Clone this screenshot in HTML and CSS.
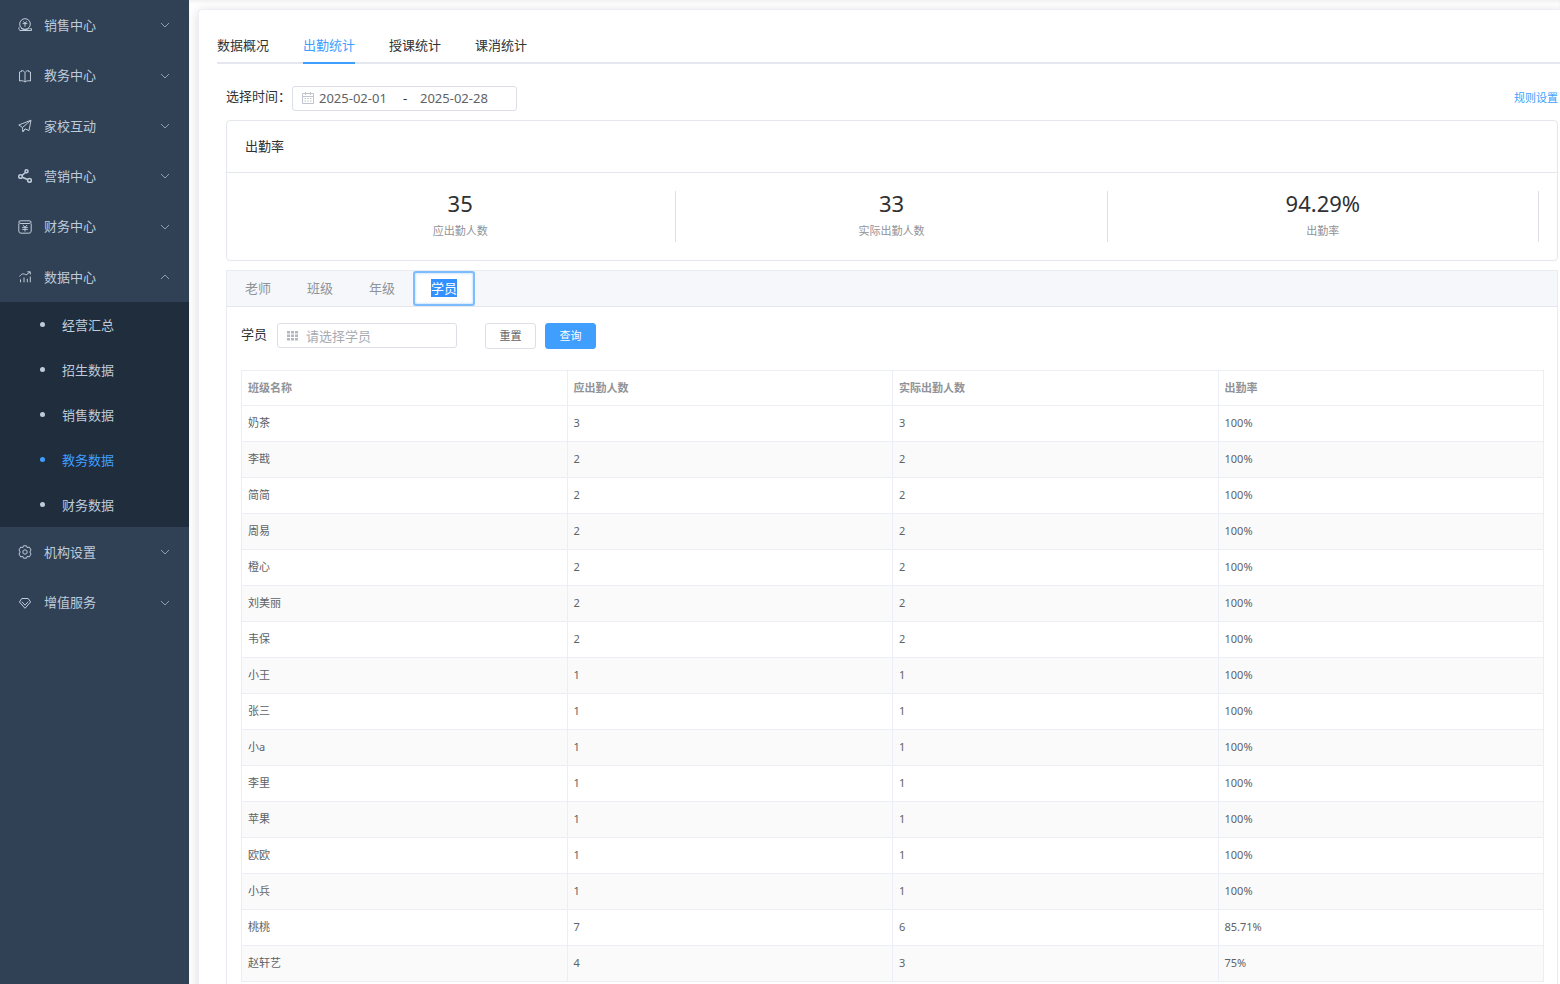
FILE: index.html
```html
<!DOCTYPE html>
<html lang="zh-CN">
<head>
<meta charset="utf-8">
<title>出勤统计</title>
<link rel="stylesheet" href="styles.css">
</head>
<body>
<div class="app">
  <nav class="sidebar" aria-label="主菜单">
    <ul class="menu">
      <li class="menu-group"><button class="menu-item" type="button">
        <svg class="icon" viewBox="0 0 14 14"><circle cx="7" cy="6" r="5.300"/><path d="M5.200 3.300L7 5.200l1.800-1.900M4.600 5.600h4.800M7 5.300v3.400M2 8.500C.6 9.500.2 11.500 2 12.500h11.500v-1.800h-2M3 10.300c2 1.600 6 1.700 8 .2"/></svg>
        <span class="menu-label">销售中心</span><svg class="chevron" viewBox="0 0 10 10"><path d="M1 3l4 4 4-4"/></svg></button></li>
      <li class="menu-group"><button class="menu-item" type="button">
        <svg class="icon" viewBox="0 0 14 14"><path d="M7 3.500v9.500M7 3.500C6 2 4.500 1.500 3.500 1.500v1L1.500 3v9c2-.5 4-.3 5.500 1 1.500-1.300 3.500-1.500 5.500-1V3l-2-.5v-1C9.500 1.500 8 2 7 3.500z"/></svg>
        <span class="menu-label">教务中心</span><svg class="chevron" viewBox="0 0 10 10"><path d="M1 3l4 4 4-4"/></svg></button></li>
      <li class="menu-group"><button class="menu-item" type="button">
        <svg class="icon" viewBox="0 0 14 14"><path d="M.8 6L13 1.200l-2 10.300-4-1.600-2.200 2.900-.3-4.300zM4.500 8.500L13 1.200M7 9.900l-2.200 2.900"/></svg>
        <span class="menu-label">家校互动</span><svg class="chevron" viewBox="0 0 10 10"><path d="M1 3l4 4 4-4"/></svg></button></li>
      <li class="menu-group"><button class="menu-item" type="button">
        <svg class="icon icon-bold" viewBox="0 0 14 14"><circle cx="8.500" cy="2.300" r="1.500"/><circle cx="2.500" cy="7.500" r="1.800"/><circle cx="11.500" cy="11.300" r="1.900"/><path d="M7.500 3.500L4 6.300M4.300 8.300l5.300 2.200"/></svg>
        <span class="menu-label">营销中心</span><svg class="chevron" viewBox="0 0 10 10"><path d="M1 3l4 4 4-4"/></svg></button></li>
      <li class="menu-group"><button class="menu-item" type="button">
        <svg class="icon" viewBox="0 0 14 14"><path d="M.8 3.500V11q0 2.200 2.200 2.200h8q2.200 0 2.200-2.200V3.500M3 .8h8q2.200 0 2.200 1.200T11 3.500H3Q.8 3.500.8 2T3 .8M4.800 5l2.200 2.200L9.200 5M4.200 7.400h5.600M4.200 9.400h5.600M7 7.200v4.300"/></svg>
        <span class="menu-label">财务中心</span><svg class="chevron" viewBox="0 0 10 10"><path d="M1 3l4 4 4-4"/></svg></button></li>
      <li class="menu-group"><button class="menu-item" type="button" aria-expanded="true">
        <svg class="icon" viewBox="0 0 14 14"><path d="M1.500 6.500C4 3 6 3.500 8 5l4-3M9.300 1.800h3v2.700M2.500 9.300v3M6 7.500v4.800M9.300 8.800v3.500M12.300 6.500v5.800"/></svg>
        <span class="menu-label">数据中心</span><svg class="chevron" viewBox="0 0 10 10"><path d="M1 7l4-4 4 4"/></svg></button>
        <ul class="submenu">
          <li><a class="submenu-item" href="#">经营汇总</a></li>
          <li><a class="submenu-item" href="#">招生数据</a></li>
          <li><a class="submenu-item" href="#">销售数据</a></li>
          <li><a class="submenu-item is-active" href="#" aria-current="page">教务数据</a></li>
          <li><a class="submenu-item" href="#">财务数据</a></li>
        </ul></li>
      <li class="menu-group"><button class="menu-item" type="button">
        <svg class="icon" viewBox="0 0 14 14"><path d="M5.500.8h3l.6 1.800 2.200-.5 1.700 2.800L11.900 7l1.100 2.100-1.700 2.800-2.200-.5-.6 1.800h-3l-.6-1.800-2.200.5L1 9.100 2.100 7 1 4.900l1.700-2.800 2.200.5z"/><circle cx="7" cy="7" r="2.200"/></svg>
        <span class="menu-label">机构设置</span><svg class="chevron" viewBox="0 0 10 10"><path d="M1 3l4 4 4-4"/></svg></button></li>
      <li class="menu-group"><button class="menu-item" type="button">
        <svg class="icon" viewBox="0 0 14 14"><path d="M3.800 2.500h6.400L12.600 6 7 12.300 1.400 6zM3.800 5.700L7 9.200l3.200-3.500"/></svg>
        <span class="menu-label">增值服务</span><svg class="chevron" viewBox="0 0 10 10"><path d="M1 3l4 4 4-4"/></svg></button></li>
    </ul>
  </nav>

  <main class="main">
    <div class="page-card">
      <nav class="page-tabs">
        <a class="page-tab" href="#">数据概况</a>
        <a class="page-tab is-active" href="#">出勤统计</a>
        <a class="page-tab" href="#">授课统计</a>
        <a class="page-tab" href="#">课消统计</a>
      </nav>

      <div class="content">
        <div class="filter-row">
          <label class="filter-label" for="date-start">选择时间：</label>
          <div class="date-range">
            <svg class="calendar" viewBox="0 0 12 12"><path d="M.5 1.500h11v10H.5zM.5 4.500h11M3.500 0v3M8.500 0v3M2.500 6.500h1.500M5.300 6.500h1.500M8 6.500h1.500M2.500 9h1.500M5.300 9h1.500M8 9h1.500"/></svg>
            <input class="date-input" id="date-start" value="2025-02-01">
            <span class="date-sep">-</span>
            <input class="date-input" aria-label="结束日期" value="2025-02-28">
          </div>
          <a class="rule-link" href="#">规则设置</a>
        </div>

        <section class="summary">
          <h2 class="summary-title">出勤率</h2>
          <div class="stats">
            <div class="stat"><div class="stat-value">35</div><div class="stat-label">应出勤人数</div></div>
            <div class="stat"><div class="stat-value">33</div><div class="stat-label">实际出勤人数</div></div>
            <div class="stat"><div class="stat-value">94.29%</div><div class="stat-label">出勤率</div></div>
          </div>
        </section>

        <section class="detail">
          <div class="detail-tabs" role="tablist">
            <button class="detail-tab" type="button" role="tab">老师</button>
            <button class="detail-tab" type="button" role="tab">班级</button>
            <button class="detail-tab" type="button" role="tab">年级</button>
            <button class="detail-tab is-active" type="button" role="tab" aria-selected="true"><span class="selected-text">学员</span></button>
          </div>
          <div class="detail-body">
            <form class="search">
              <label class="search-label" for="student">学员</label>
              <div class="search-box">
                <svg class="grid-icon" viewBox="0 0 11 10"><path d="M0 0h3v2.500H0zM4 0h3v2.500H4zM8 0h3v2.500H8zM0 3.500h3V6H0zM4 3.500h3V6H4zM8 3.500h3V6H8zM0 7h3v2.500H0zM4 7h3v2.500H4zM8 7h3v2.500H8z"/></svg>
                <input class="search-input" id="student" placeholder="请选择学员">
              </div>
              <button class="btn" type="reset">重置</button>
              <button class="btn btn-primary" type="button">查询</button>
            </form>
            <table class="table">
              <thead><tr><th>班级名称</th><th>应出勤人数</th><th>实际出勤人数</th><th>出勤率</th></tr></thead>
              <tbody>
                <tr><td>奶茶</td><td>3</td><td>3</td><td>100%</td></tr>
                <tr><td>李戡</td><td>2</td><td>2</td><td>100%</td></tr>
                <tr><td>简简</td><td>2</td><td>2</td><td>100%</td></tr>
                <tr><td>周易</td><td>2</td><td>2</td><td>100%</td></tr>
                <tr><td>橙心</td><td>2</td><td>2</td><td>100%</td></tr>
                <tr><td>刘美丽</td><td>2</td><td>2</td><td>100%</td></tr>
                <tr><td>韦保</td><td>2</td><td>2</td><td>100%</td></tr>
                <tr><td>小王</td><td>1</td><td>1</td><td>100%</td></tr>
                <tr><td>张三</td><td>1</td><td>1</td><td>100%</td></tr>
                <tr><td>小a</td><td>1</td><td>1</td><td>100%</td></tr>
                <tr><td>李里</td><td>1</td><td>1</td><td>100%</td></tr>
                <tr><td>苹果</td><td>1</td><td>1</td><td>100%</td></tr>
                <tr><td>欧欧</td><td>1</td><td>1</td><td>100%</td></tr>
                <tr><td>小兵</td><td>1</td><td>1</td><td>100%</td></tr>
                <tr><td>桃桃</td><td>7</td><td>6</td><td>85.71%</td></tr>
                <tr><td>赵轩艺</td><td>4</td><td>3</td><td>75%</td></tr>
              </tbody>
            </table>
          </div>
        </section>
      </div>
    </div>
  </main>
</div>
</body>
</html>
```
FILE: styles.css
```css
* { box-sizing: border-box; }
body {
  margin: 0;
  font: 13px/20px "Noto Sans", "Noto Sans CJK SC", sans-serif;
  color: #303133;
  background: #fff;
}
button, input { font: inherit; color: inherit; margin: 0; padding: 0; border: 0; background: none; }
button { cursor: pointer; }
input { min-width: 0; outline: 0; }
a { color: inherit; text-decoration: none; }
ul { margin: 0; padding: 0; list-style: none; }
svg { flex: none; fill: none; stroke: currentColor; }

.app { display: flex; height: 100vh; overflow: hidden; }

/* Sidebar */
.sidebar { flex: none; width: 189px; background: #304156; color: #bfcbd9; }
.menu-item { display: flex; align-items: center; width: 100%; height: 50px; padding: 0 19px 0 18px; text-align: left; }
.menu-group:nth-child(3n+2) .menu-item { height: 51px; }
.icon { width: 14px; height: 14px; margin-right: 12px; stroke-width: 1; }
.icon-bold { stroke-width: 1.5; }
.menu-label { flex: 1; padding-bottom: 1px; }
.chevron { width: 10px; height: 10px; stroke: #909fb0; }
.submenu { background: #1f2d3d; }
.submenu-item { display: flex; align-items: center; gap: 17px; height: 45px; padding-left: 40px; }
.submenu-item::before { content: ""; width: 5px; height: 5px; border-radius: 50%; background: currentColor; }
.submenu-item.is-active { color: #409eff; }

/* Page */
.main { flex: 1; min-width: 0; padding: 9px 0 0 9px; box-shadow: inset 0 2px 3px rgba(0, 0, 0, .06); }
.page-card {
  min-height: 100%;
  padding: 18px 0 18px 18px;
  border: 1px solid #ebeef5;
  border-right: 0;
  border-radius: 4px 0 0 0;
  box-shadow: 0 2px 12px rgba(0, 0, 0, .15);
  background: #fff;
}
.page-tabs { display: flex; gap: 34px; box-shadow: inset 0 -2px #e4e7ed; }
.page-tab { padding: 7px 0 7px; border-bottom: 2px solid transparent; }
.page-tab.is-active { color: #409eff; border-color: #409eff; }
.content { padding: 22px 2px 0 9px; }

.filter-row { display: flex; align-items: flex-start; }
.filter-label { width: 66px; white-space: nowrap; }
.date-range {
  display: flex; align-items: center;
  width: 225px; height: 25px; padding: 0 9px 1px;
  border: 1px solid #dcdfe6; border-radius: 3px;
  color: #606266;
}
.calendar { width: 12px; height: 12px; margin-right: 5px; stroke: #c0c4cc; }
.date-input { width: 76px; }
.date-sep { width: 25px; padding-left: 8px; color: #303133; }
.rule-link { margin-left: auto; font-size: 11px; line-height: 24px; color: #409eff; }

.summary { margin-top: 9px; border: 1px solid #e4e7ed; border-radius: 4px; }
.summary-title { margin: 0; padding: 15px 18px 16px; border-bottom: 1px solid #e4e7ed; font-size: 13px; font-weight: 400; }
.stats { display: grid; grid-template-columns: repeat(3, 1fr); padding: 18px; }
.stat { border-right: 1px solid #dcdfe6; text-align: center; }
.stat-value { padding-bottom: 5px; font-size: 22px; line-height: 24px; }
.stat-label { font-size: 11px; line-height: 22px; color: #909399; }

.detail { margin-top: 9px; border: 1px solid #e8ebf2; }
.detail-tabs { display: flex; height: 36px; border-bottom: 1px solid #e4e7ed; background: #f5f7fa; color: #909399; }
.detail-tab { padding: 0 18px 2px; }
.detail-tab.is-active {
  border-radius: 3px;
  background: #fff;
  box-shadow: inset 0 0 0 2px #7dbcff, inset 0 0 2px 3px #d4e8ff;
}
.selected-text { background: #3390ff; color: #fff; }
.detail-body { padding: 16px 13px 14px 14px; }
.search { display: flex; align-items: flex-start; margin-bottom: 21px; }
.search-label { width: 36px; line-height: 22px; }
.search-box {
  display: flex; align-items: center; gap: 8px;
  width: 180px; height: 25px; margin-right: 28px; padding: 0 9px;
  border: 1px solid #dcdfe6; border-radius: 3px;
}
.grid-icon { width: 11px; height: 10px; fill: #b4b7bd; stroke: none; }
.search-input { flex: 1; }
.search-input::placeholder { color: #a8abb2; }
.btn { width: 51px; height: 26px; border: 1px solid #dcdfe6; border-radius: 3px; font-size: 11px; line-height: 24px; color: #606266; }
.btn + .btn { margin-left: 9px; }
.btn-primary { border-color: #409eff; background: #409eff; color: #fff; }

.table { width: 100%; table-layout: fixed; border-collapse: collapse; font-size: 11px; color: #606266; }
.table th, .table td { height: 36px; padding: 0 7px 1px 6px; border: 1px solid #ebeef5; text-align: left; }
.table th { height: 35px; color: #909399; font-weight: 700; }
.table tbody tr:nth-child(even) { background: #fafafa; }
```
